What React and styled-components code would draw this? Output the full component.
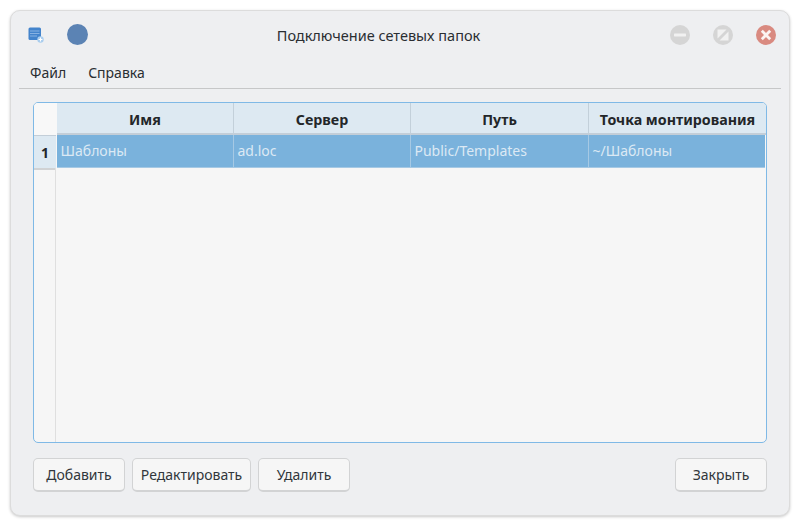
import React from 'react'
import styled, { createGlobalStyle } from "styled-components";

const columns = [
  { title: "Имя", value: "Шаблоны", width: 177 },
  { title: "Сервер", value: "ad.loc", width: 177 },
  { title: "Путь", value: "Public/Templates", width: 178 },
  { title: "Точка монтирования", value: "~/Шаблоны", width: 176 },
];

const App = () => {
  return (
    <>
      <Global />
      <Page>
        <Window>
          <TitleBar>
            <LeftIcons>
              <AppIcon viewBox="0 0 16 16">
                <rect x="0.5" y="0.5" width="12.5" height="12.5" rx="1.5" fill="#4384cc" />
                <path d="M2 4h9.5M2 6.5h9.5M2 9h7" stroke="#8fb8e4" strokeWidth="0.9" />
                <circle cx="12.5" cy="12.5" r="3.2" fill="#a9cdee" />
                <path d="M12.5 10.6v3.8M10.6 12.5h3.8" stroke="#fff" strokeWidth="1.1" />
              </AppIcon>
              <RoundIcon />
            </LeftIcons>
            <Title>Подключение сетевых папок</Title>
            <WindowButtons>
              <WindowButton viewBox="0 0 20 20">
                <circle cx="10" cy="10" r="10" fill="#d5d5d5" />
                <rect x="4" y="8.6" width="12" height="2.8" rx="0.6" fill="#f1f1f1" />
              </WindowButton>
              <WindowButton viewBox="0 0 20 20">
                <circle cx="10" cy="10" r="10" fill="#d5d5d5" />
                <path d="M4.5 4.5h9L4.5 13.5zM15.5 15.5h-9l9-9z" fill="#f1f1f1" />
              </WindowButton>
              <WindowButton viewBox="0 0 20 20">
                <circle cx="10" cy="10" r="10" fill="#d98a80" />
                <path d="M5.8 5.8l8.4 8.4M14.2 5.8l-8.4 8.4" stroke="#fbf3f2" strokeWidth="2.8" />
              </WindowButton>
            </WindowButtons>
          </TitleBar>
          <MenuBar>
            <MenuItem>Файл</MenuItem>
            <MenuItem>Справка</MenuItem>
          </MenuBar>
          <Content>
            <TableFrame>
              <HeaderRow>
                <Corner />
                {columns.map((c) => (
                  <HeadCell key={c.title} $width={c.width}>{c.title}</HeadCell>
                ))}
              </HeaderRow>
              <DataRow>
                <RowNumber>1</RowNumber>
                {columns.map((c) => (
                  <Cell key={c.title} $width={c.width}>{c.value}</Cell>
                ))}
              </DataRow>
              <EmptyArea>
                <EmptyGutter />
              </EmptyArea>
            </TableFrame>
            <ButtonRow>
              <Button $width={92}>Добавить</Button>
              <Button $width={119}>Редактировать</Button>
              <Button $width={92}>Удалить</Button>
              <Spacer />
              <Button $width={92}>Закрыть</Button>
            </ButtonRow>
          </Content>
        </Window>
      </Page>
    </>
  )
};

const Global = createGlobalStyle`
  html, body {
    margin: 0;
    padding: 0;
    background: #ffffff;
  }
  * {
    box-sizing: border-box;
  }
`;

const Page = styled.div`
  width: 800px;
  height: 526px;
  padding: 10px;
  font-family: "Noto Sans", "Open Sans", sans-serif;
  font-size: 14px;
  color: #31363b;
`;

const Window = styled.div`
  width: 780px;
  height: 506px;
  display: flex;
  flex-direction: column;
  background: #eeeff1;
  border: 1px solid #dcdcdc;
  border-radius: 10px;
  box-shadow: 0 1px 3px rgba(0, 0, 0, 0.22);
`;

const TitleBar = styled.div`
  position: relative;
  height: 47px;
  flex: none;
  display: flex;
  align-items: center;
  justify-content: space-between;
  padding: 0 13px 0 17px;
`;

const LeftIcons = styled.div`
  display: flex;
  align-items: center;
  gap: 23px;
`;

const AppIcon = styled.svg`
  width: 16px;
  height: 16px;
`;

const RoundIcon = styled.div`
  width: 21px;
  height: 21px;
  border-radius: 50%;
  background: #5b83b4;
`;

const Title = styled.div`
  position: absolute;
  left: 0;
  right: 43px;
  top: 14px;
  text-align: center;
  font-size: 14.5px;
  line-height: 20px;
  color: #2a2e32;
`;

const WindowButtons = styled.div`
  display: flex;
  align-items: center;
  gap: 23px;
`;

const WindowButton = styled.svg`
  width: 20px;
  height: 20px;
`;

const MenuBar = styled.div`
  height: 31px;
  flex: none;
  margin: 0 8px;
  padding: 0 11px 1px;
  display: flex;
  align-items: center;
  gap: 22px;
  border-bottom: 1px solid #c6c7c8;
`;

const MenuItem = styled.span`
  color: #2a2e32;
  line-height: 20px;
`;

const Content = styled.div`
  flex: 1;
  display: flex;
  flex-direction: column;
  padding: 13px 22px 24px;
`;

const TableFrame = styled.div`
  height: 341px;
  flex: none;
  display: flex;
  flex-direction: column;
  background: #f6f6f6;
  border: 1px solid #7fb9e6;
  border-radius: 5px;
  overflow: hidden;
`;

const HeaderRow = styled.div`
  height: 32px;
  flex: none;
  display: flex;
`;

const Corner = styled.div`
  width: 23px;
  flex: none;
  background: #f8f8f8;
`;

const HeadCell = styled.div`
  width: ${(p) => p.$width}px;
  flex: none;
  display: flex;
  align-items: center;
  justify-content: center;
  padding-top: 2px;
  background: #dde9f2;
  border-right: 1px solid #c3d0da;
  border-bottom: 2px solid #c3ced8;
  font-size: 14.25px;
  font-weight: 700;
  color: #232629;
  white-space: nowrap;
  &:last-child {
    width: 177px;
    border-right: none;
  }
`;

const DataRow = styled.div`
  height: 33px;
  flex: none;
  display: flex;
`;

const RowNumber = styled.div`
  width: 22px;
  height: 35px;
  margin-right: 1px;
  flex: none;
  display: flex;
  align-items: center;
  justify-content: center;
  background: #dde9f2;
  border-top: 1px solid #c3ced8;
  border-bottom: 2px solid #d0d2d4;
  font-weight: 700;
  color: #232629;
`;

const Cell = styled.div`
  width: ${(p) => p.$width}px;
  flex: none;
  display: flex;
  align-items: center;
  padding: 0 0 2px 3.5px;
  background: #7ab2dc;
  border-right: 1px solid #a6c9e4;
  border-bottom: 1px solid #a6c9e4;
  color: #dce9f4;
  white-space: nowrap;
  &:last-child {
    border-right: none;
  }
`;

const EmptyArea = styled.div`
  flex: 1;
  display: flex;
`;

const EmptyGutter = styled.div`
  width: 22px;
  border-right: 1px solid #dfdfdf;
`;

const ButtonRow = styled.div`
  margin-top: 15px;
  display: flex;
  gap: 7px;
`;

const Spacer = styled.div`
  flex: 1;
`;

const Button = styled.button`
  width: ${(p) => p.$width}px;
  height: 34px;
  padding: 0;
  background: #f6f6f6;
  border: 1px solid #d2d3d4;
  border-bottom-width: 2px;
  border-radius: 5px;
  font-family: inherit;
  font-size: 14px;
  color: #31363b;
`;

export default App
